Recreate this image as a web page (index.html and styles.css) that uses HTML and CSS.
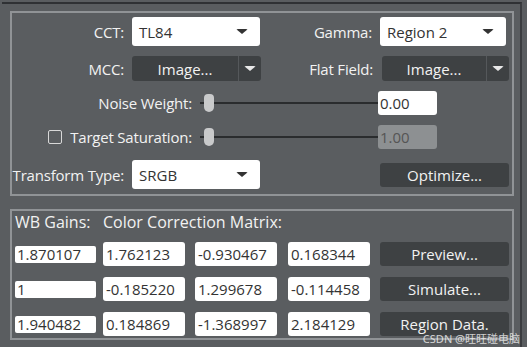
FILE: index.html
```html
<!DOCTYPE html>
<html lang="en">
<head>
    <meta charset="UTF-8">
    <meta name="viewport" content="width=device-width, initial-scale=1.0">
    <title>Color Calibration</title>
    <link rel="stylesheet" href="styles.css">
</head>
<body>

    <div class="frame">
        <!-- settings -->
        <div class="panel settings">
            <div class="row row-select">
                <span class="label w112">CCT:</span>
                <div class="select w128"><span>TL84</span><span class="caret"></span></div>
                <span class="label w112">Gamma:</span>
                <div class="select w126"><span>Region 2</span><span class="caret"></span></div>
            </div>

            <div class="row row-split">
                <span class="label w112">MCC:</span>
                <div class="split w129"><span class="split-main">Image...</span><span class="split-arrow"><span class="caret light"></span></span></div>
                <span class="label w111">Flat Field:</span>
                <div class="split w127"><span class="split-main">Image...</span><span class="split-arrow"><span class="caret light"></span></span></div>
            </div>

            <div class="row row-slider">
                <span class="label w180">Noise Weight:</span>
                <div class="slider"><span class="thumb"></span></div>
                <div class="value">0.00</div>
            </div>

            <div class="row row-slider">
                <span class="label w180"><span class="check"></span>Target Saturation:</span>
                <div class="slider"><span class="thumb"></span></div>
                <div class="value disabled">1.00</div>
            </div>

            <div class="row row-select last">
                <span class="label w112">Transform Type:</span>
                <div class="select w128"><span>SRGB</span><span class="caret"></span></div>
                <span class="spacer"></span>
                <button class="button w129">Optimize...</button>
            </div>
        </div>

        <!-- matrix -->
        <div class="panel matrix">
            <div class="heads">
                <span class="head wb">WB Gains:</span>
                <span class="head">Color Correction Matrix:</span>
            </div>
            <div class="grid">
                <div class="cell"><div class="small-box">1.870107</div></div>
                <div class="cell"><div class="box">1.762123</div></div>
                <div class="cell"><div class="box">-0.930467</div></div>
                <div class="cell"><div class="box">0.168344</div></div>
                <button class="button">Preview...</button>

                <div class="cell"><div class="small-box">1</div></div>
                <div class="cell"><div class="box">-0.185220</div></div>
                <div class="cell"><div class="box">1.299678</div></div>
                <div class="cell"><div class="box">-0.114458</div></div>
                <button class="button">Simulate...</button>

                <div class="cell"><div class="small-box">1.940482</div></div>
                <div class="cell"><div class="box">0.184869</div></div>
                <div class="cell"><div class="box">-1.368997</div></div>
                <div class="cell"><div class="box">2.184129</div></div>
                <button class="button">Region Data.</button>
            </div>
        </div>

        <div class="watermark">CSDN @旺旺碰电脑</div>
    </div>

</body>
</html>
```

FILE: styles.css
```css
body {
    margin: 0;
    width: 527px;
    height: 347px;
    overflow: hidden;
    background-color: #5a5d60;
    font-family: "Open Sans", "Noto Sans", sans-serif;
    font-size: 15px;
    color: #f2f2f2;
}

.frame {
    position: relative;
    box-sizing: border-box;
    width: 520px;
    height: 347px;
    margin-top: 2px;
    margin-left: 2px;
    border-top: 2px solid #2f3134;
    border-right: 2px solid #3a3c3f;
    padding: 7px 0 0 8px;
}

.panel {
    box-sizing: border-box;
    width: 504px;
    border: 2px solid #909396;
}

.settings {
    height: 185px;
    padding-top: 4px;
}

.matrix {
    height: 131px;
    margin-top: 13px;
}

.row {
    display: flex;
    align-items: center;
}

.row-select {
    height: 29px;
}

.row-split {
    height: 25px;
    margin-top: 10px;
}

.row-slider {
    height: 24px;
    margin-top: 10px;
}

.row-select.last {
    margin-top: 11px;
}

.label {
    display: flex;
    align-items: center;
    justify-content: flex-end;
    white-space: nowrap;
    font-size: 15px;
    letter-spacing: -0.2px;
}

.w112 { width: 112px; margin-right: 8px; }
.w111 { width: 112px; margin-right: 9px; }
.w180 { width: 180px; }
.w128 { width: 128px; }
.w126 { width: 126px; }
.w127 { width: 127px; }
.w129 { width: 129px; }

.select {
    box-sizing: border-box;
    height: 29px;
    background-color: #fff;
    border-radius: 3px;
    color: #333;
    display: flex;
    align-items: center;
    justify-content: space-between;
    padding: 0 12px 0 7px;
}

.caret {
    width: 0;
    height: 0;
    border-left: 6px solid transparent;
    border-right: 6px solid transparent;
    border-top: 5px solid #333;
    border-radius: 2px;
}

.caret.light {
    border-top-color: #e8e8e8;
}

.split {
    display: flex;
    height: 25px;
    background-color: #3e4143;
    border-radius: 3px;
}

.split-main {
    flex: 1;
    display: flex;
    align-items: center;
    justify-content: center;
    border-right: 1px solid #55585b;
}

.split-arrow {
    width: 22px;
    display: flex;
    align-items: center;
    justify-content: center;
}

.slider {
    position: relative;
    width: 178px;
    height: 24px;
    margin-left: 8px;
}

.slider::before {
    content: "";
    position: absolute;
    left: 0;
    right: 0;
    top: 11px;
    height: 2px;
    background-color: #2a2c2e;
}

.thumb {
    position: absolute;
    left: 4px;
    top: 3px;
    width: 10px;
    height: 18px;
    background-color: #c9cacb;
    border-radius: 4px 4px 5px 5px;
}

.value {
    box-sizing: border-box;
    width: 59px;
    height: 24px;
    background-color: #fff;
    border-radius: 3px;
    color: #333;
    padding-left: 2px;
    line-height: 24px;
}

.value.disabled {
    background-color: #8d9092;
    color: #555;
}

.check {
    width: 12px;
    height: 12px;
    border: 1px solid #d8d8d8;
    border-radius: 2px;
    margin-right: 8px;
}

.spacer {
    width: 120px;
}

.button {
    box-sizing: border-box;
    height: 24px;
    padding: 0;
    border: none;
    border-radius: 3px;
    background-color: #3e4143;
    color: #f2f2f2;
    font-family: inherit;
    font-size: 15px;
    cursor: pointer;
}

.heads {
    display: flex;
    height: 22px;
    align-items: center;
    padding-left: 3px;
    font-size: 16px;
}

.head.wb {
    width: 88px;
}

.grid {
    display: grid;
    grid-template-columns: 88px 92px 93px 92px 129px;
    grid-auto-rows: 24px;
    row-gap: 11px;
    margin-top: 9px;
    padding-left: 3px;
}

.cell {
    display: flex;
    align-items: center;
}

.box {
    box-sizing: border-box;
    width: 82px;
    height: 24px;
    background-color: #fff;
    border-radius: 3px;
    color: #333;
    padding-left: 3px;
    line-height: 24px;
}

.small-box {
    box-sizing: border-box;
    width: 81px;
    height: 17px;
    background-color: #fff;
    border-radius: 2px;
    color: #333;
    padding-left: 2px;
    line-height: 17px;
}

.watermark {
    position: absolute;
    right: 0;
    bottom: 3px;
    font-family: "Noto Sans", "Noto Sans CJK SC", sans-serif;
    font-size: 11px;
    color: rgba(255, 255, 255, 0.75);
}
```
